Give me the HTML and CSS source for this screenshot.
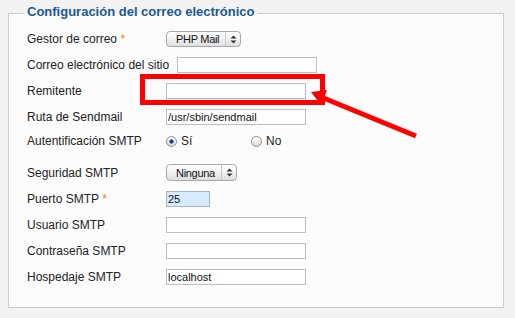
FILE: index.html
```html
<!DOCTYPE html>
<html lang="es">
<head>
  <meta charset="UTF-8">
  <meta name="viewport" content="width=device-width, initial-scale=1.0">
  <title>Configuración del correo electrónico</title>
  <link rel="stylesheet" href="styles.css">
</head>
<body>

<fieldset class="adminform">
  <legend>Configuración del correo electrónico</legend>
  <ul class="formList">
    <li class="row">
      <label class="fieldLabel" for="mailer">Gestor de correo <span class="star">*</span></label>
      <span class="selectWrap mailer">
        <select id="mailer" class="select"><option>PHP Mail</option><option>Sendmail</option><option>SMTP</option></select>
        <span class="arrows"><svg width="7" height="9" viewBox="0 0 7 9"><polygon points="0.5,3.5 3.5,0.5 6.5,3.5"/><polygon points="0.5,5.5 3.5,8.5 6.5,5.5"/></svg></span>
      </span>
    </li>
    <li class="row">
      <label class="fieldLabel" for="mailfrom">Correo electrónico del sitio</label>
      <input type="text" class="text" id="mailfrom" />
    </li>
    <li class="row">
      <label class="fieldLabel" for="fromname">Remitente</label>
      <input type="text" class="text" id="fromname" />
    </li>
    <li class="row">
      <label class="fieldLabel" for="sendmail">Ruta de Sendmail</label>
      <input type="text" class="text" id="sendmail" value="/usr/sbin/sendmail" />
    </li>
    <li class="row radioRow">
      <span class="fieldLabel">Autentificación SMTP</span>
      <label class="radio first"><input type="radio" name="smtpauth" checked /> Sí</label>
      <label class="radio"><input type="radio" name="smtpauth" /> No</label>
    </li>
    <li class="row">
      <label class="fieldLabel" for="smtpsecure">Seguridad SMTP</label>
      <span class="selectWrap secure">
        <select id="smtpsecure" class="select"><option>Ninguna</option><option>SSL</option><option>TLS</option></select>
        <span class="arrows"><svg width="7" height="9" viewBox="0 0 7 9"><polygon points="0.5,3.5 3.5,0.5 6.5,3.5"/><polygon points="0.5,5.5 3.5,8.5 6.5,5.5"/></svg></span>
      </span>
    </li>
    <li class="row">
      <label class="fieldLabel" for="smtpport">Puerto SMTP <span class="star">*</span></label>
      <input type="text" class="text short" id="smtpport" value="25" />
    </li>
    <li class="row">
      <label class="fieldLabel" for="smtpuser">Usuario SMTP</label>
      <input type="text" class="text" id="smtpuser" />
    </li>
    <li class="row">
      <label class="fieldLabel" for="smtppass">Contraseña SMTP</label>
      <input type="password" class="text" id="smtppass" />
    </li>
    <li class="row">
      <label class="fieldLabel" for="smtphost">Hospedaje SMTP</label>
      <input type="text" class="text" id="smtphost" value="localhost" />
    </li>
  </ul>
</fieldset>

<!-- red annotation drawn over the form -->
<svg class="annotation" width="515" height="318" viewBox="0 0 515 318">
  <rect x="142.5" y="76.5" width="180" height="26" fill="none" stroke="#f00" stroke-width="5"/>
  <line x1="321" y1="97" x2="416" y2="136" stroke="#f00" stroke-width="5"/>
  <polygon points="311,92 327,90 321,105" fill="#f00"/>
</svg>

</body>
</html>
```

FILE: styles.css
```css
body {
  font-family: "Liberation Sans", Arial, sans-serif;
  font-size: 12px;
  color: #222;
  background-color: #f2f2f2;
  margin: 0;
  padding: 0 0 0 8px;
}

.adminform {
  box-sizing: border-box;
  width: 496px;
  margin: 4px 0 0;
  padding: 4px 10px 17px 16px;
  border: 1px solid #ccc;
  background-color: #fcfcfc;
}

.adminform legend {
  font-size: 13px;
  font-weight: bold;
  line-height: 15px;
  color: #1b5a8f;
  padding: 0 2px 3px;
}

.formList {
  list-style: none;
  margin: 0;
  padding: 0;
}

.row {
  display: flex;
  align-items: center;
  min-height: 16px;
  padding: 5px 0 5px 2px;
}

.radioRow {
  padding: 3px 0 10px 2px;
}

.fieldLabel {
  flex: none;
  box-sizing: border-box;
  min-width: 139px;
  padding-right: 8px;
  line-height: 16px;
}

.star {
  color: #ef7d22;
}

.text {
  box-sizing: border-box;
  width: 140px;
  height: 16px;
  margin: 0;
  padding: 0 1px;
  border: 1px solid #bdbdbd;
  background-color: #fff;
  font-family: "Liberation Sans", Arial, sans-serif;
  font-size: 11px;
  color: #111;
}

.text.short {
  width: 44px;
  background-color: #d6ebfd;
  border-color: #aab4bd;
}

.selectWrap {
  position: relative;
  display: inline-block;
}

.select {
  -webkit-appearance: none;
  appearance: none;
  box-sizing: border-box;
  height: 16px;
  margin: 0;
  padding: 0 18px 0 9px;
  border: 1px solid #a9a9a9;
  border-radius: 4px;
  background: linear-gradient(#ffffff, #f1f1f1 50%, #dedede);
  font-family: "Liberation Sans", Arial, sans-serif;
  font-size: 11px;
  letter-spacing: -0.3px;
  color: #111;
}

.mailer .select {
  width: 75px;
}

.secure .select {
  width: 71px;
  height: 17px;
}

.arrows {
  position: absolute;
  top: 1px;
  right: 1px;
  bottom: 1px;
  width: 14px;
  border-left: 1px solid #c4c4c4;
  display: flex;
  align-items: center;
  justify-content: center;
  pointer-events: none;
}

.arrows svg {
  fill: #333;
}

.radio {
  display: inline-flex;
  align-items: center;
  line-height: 16px;
}

.radio.first {
  width: 85px;
}

.radio input {
  -webkit-appearance: none;
  appearance: none;
  width: 11px;
  height: 11px;
  margin: 0 4px 0 0;
  border: 1px solid #8f8f8f;
  border-radius: 50%;
  background: linear-gradient(#ffffff, #dadada);
}

.radio input:checked {
  background: radial-gradient(circle, #1e3c72 0, #1e3c72 1.8px, transparent 2.4px), linear-gradient(#ffffff, #d2d8e2);
}

.annotation {
  position: absolute;
  top: 0;
  left: 0;
  pointer-events: none;
}
```
